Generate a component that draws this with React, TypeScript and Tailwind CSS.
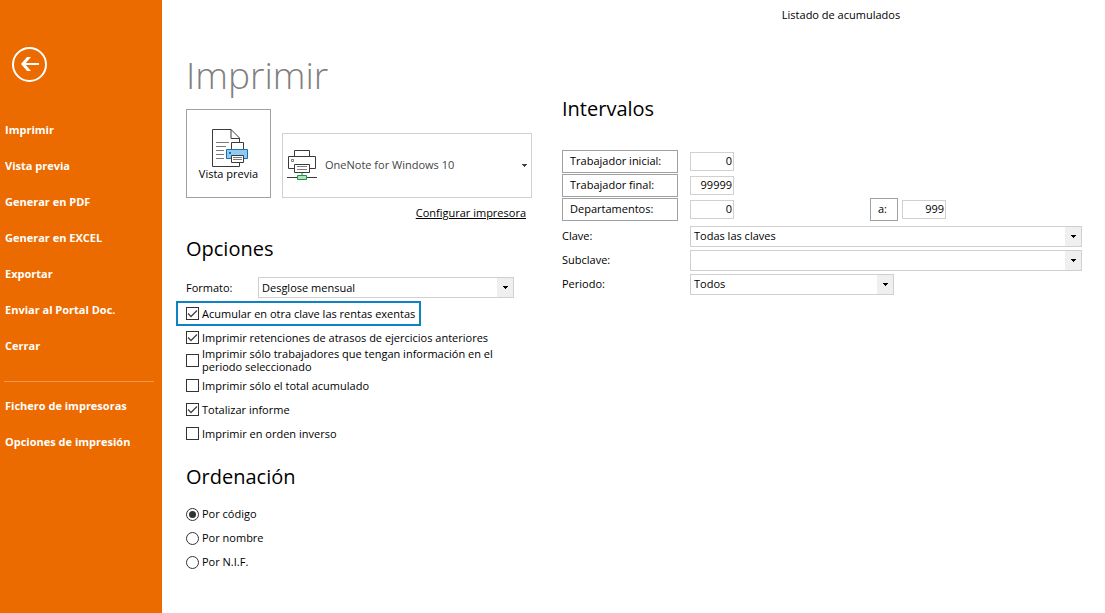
import type { ReactNode } from "react";

const mainLinks = [
  "Imprimir",
  "Vista previa",
  "Generar en PDF",
  "Generar en EXCEL",
  "Exportar",
  "Enviar al Portal Doc.",
  "Cerrar",
];

const extraLinks = ["Fichero de impresoras", "Opciones de impresión"];

function NavLink({ label }: { label: string }) {
  return (
    <a href="#" className="flex h-9 items-center px-[5px] hover:bg-[#d45f00]">
      {label}
    </a>
  );
}

function Sidebar() {
  return (
    <nav className="w-[162px] shrink-0 bg-[#eb6b00] pt-[47px] font-bold text-white">
      <button type="button" aria-label="Volver" className="ml-3 block">
        <svg width="35" height="35" viewBox="0 0 35 35" fill="none" stroke="white">
          <circle cx="17.5" cy="17.5" r="16.5" strokeWidth="2" />
          <path d="M10 17H27" strokeWidth="2" />
          <path d="M9 17L15 10H19L13 17L19 24H15Z" fill="white" stroke="none" />
        </svg>
      </button>
      <div className="mt-[30px]">
        {mainLinks.map((label) => (
          <NavLink key={label} label={label} />
        ))}
      </div>
      <hr className="mt-[17px] mr-2 mb-[6px] ml-1 border-[#f39850]" />
      {extraLinks.map((label) => (
        <NavLink key={label} label={label} />
      ))}
    </nav>
  );
}

function PreviewIcon() {
  return (
    <svg width="37" height="39" viewBox="0 0 37 39" fill="none" className="ml-1 shrink-0">
      <path d="M0.5 0.5H19L27.5 9V37.5H0.5Z" fill="white" stroke="#3b3b3b" />
      <path d="M19 0.5V9.5H27.5" stroke="#3b3b3b" />
      <path d="M4 13.5H17M4 17.5H14M4 21.5H12M4 25.5H12M4 29.5H12" stroke="#7a7a7a" />
      <path d="M19.5 20.5V13.5H31.5V20.5Z" fill="white" stroke="#3b3b3b" />
      <path d="M14.5 20.5H35.5V29.5H14.5Z" fill="#8fcaf0" stroke="#1a6fb5" />
      <path d="M17 23H19V25H17Z" fill="#1a6fb5" />
      <path d="M19.5 26.5H31.5V33.5H19.5Z" fill="white" stroke="#3b3b3b" />
      <path d="M21 28.5H30M21 30.5H30" stroke="#7a7a7a" />
    </svg>
  );
}

function PrinterIcon() {
  return (
    <svg width="31" height="31" viewBox="0 0 31 31" fill="none">
      <path d="M7.5 7V0.5H22.5V7" stroke="#3b3b3b" />
      <path d="M7 18.5H1.5V6.5H28.5V18.5H23" stroke="#3b3b3b" />
      <path d="M4.5 9.5H6.5V11.5H4.5Z" stroke="#7a7a7a" />
      <path d="M7.5 14.5H22.5V22.5H7.5Z" stroke="#3b3b3b" />
      <path d="M10 16.5H20M10 19.5H20" stroke="#7a7a7a" />
      <path d="M15 23V26" stroke="#b0b0b0" strokeWidth="2" />
      <path d="M0 27.5H30" stroke="#3b3b3b" />
      <path d="M10.5 25.5H19.5V29.5H10.5Z" fill="#b5dfbf" stroke="#0f9a48" />
    </svg>
  );
}

function Caret() {
  return (
    <svg width="5" height="3" viewBox="0 0 5 3" fill="currentColor">
      <path d="M0 0H5V1H4V2H3V3H2V2H1V1H0Z" />
    </svg>
  );
}

function Select({ id, value, className }: { id: string; value: string; className: string }) {
  return (
    <div className={`relative h-[21px] border border-[#d0d0d0] ${className}`}>
      <select id={id} className="block h-full w-full appearance-none bg-white pt-px pr-5 pl-[3px] outline-none">
        <option>{value}</option>
      </select>
      <span className="pointer-events-none absolute inset-y-0 right-0 flex w-4 items-center justify-center bg-[#efefef]">
        <Caret />
      </span>
    </div>
  );
}

type CheckProps = { checked?: boolean; className?: string; children: ReactNode };

function Check({ checked = false, className = "", children }: CheckProps) {
  return (
    <label className={`flex min-h-6 items-center gap-[3px] leading-[13px] ${className}`}>
      <span className="relative size-[13px] shrink-0">
        <input
          type="checkbox"
          defaultChecked={checked}
          className="peer block size-[13px] appearance-none border border-[#333333] bg-white"
        />
        <svg
          viewBox="0 0 13 13"
          className="pointer-events-none absolute inset-0 hidden size-[13px] peer-checked:block"
          fill="none"
          stroke="#444444"
        >
          <path d="M2 6.5L5 9.5L11 3.5" strokeWidth="1.3" />
        </svg>
      </span>
      <span>{children}</span>
    </label>
  );
}

function Radio({ checked = false, label }: { checked?: boolean; label: string }) {
  return (
    <label className="flex h-6 items-center gap-[3px]">
      <input
        type="radio"
        name="orden"
        defaultChecked={checked}
        className="size-[13px] appearance-none rounded-full border border-[#333333] bg-white bg-clip-content p-[2px] checked:bg-[#333333]"
      />
      {label}
    </label>
  );
}

function NumberBox({ label, value }: { label: string; value: string }) {
  return (
    <input
      aria-label={label}
      defaultValue={value}
      className="h-[19px] w-11 border border-[#d0d0d0] pr-px pb-[2px] text-right outline-none"
    />
  );
}

function RangeButton({ children, className }: { children: ReactNode; className: string }) {
  return (
    <button type="button" className={`h-[23px] border border-[#a0a0a0] px-[7px] pt-px text-left ${className}`}>
      {children}
    </button>
  );
}

function PrintOptions() {
  return (
    <section className="w-[346px] shrink-0">
      <h1 className="h-[55px] text-[37px] leading-[42px] font-light text-[#808080]">Imprimir</h1>
      <div className="flex items-end justify-between">
        <button
          type="button"
          className="flex h-[89px] w-[85px] flex-col items-center justify-center border border-[#a0a0a0] leading-[11px]"
        >
          <PreviewIcon />
          Vista previa
        </button>
        <div className="relative h-[65px] w-[250px] border border-[#d0d0d0] text-[#444444]">
          <select aria-label="Impresora" className="h-full w-full appearance-none bg-white pl-[42px] outline-none">
            <option>OneNote for Windows 10</option>
          </select>
          <span className="pointer-events-none absolute inset-y-0 left-1 flex items-center">
            <PrinterIcon />
          </span>
          <span className="pointer-events-none absolute inset-y-0 right-1 flex items-center">
            <Caret />
          </span>
        </div>
      </div>
      <div className="mt-[5px] pr-[6px] text-right leading-5">
        <a href="#" className="underline">
          Configurar impresora
        </a>
      </div>

      <h2 className="mt-[11px] text-xl leading-[30px]">Opciones</h2>
      <div className="mt-[13px] flex items-center">
        <label htmlFor="formato" className="w-[72px] pt-px">
          Formato:
        </label>
        <Select id="formato" value="Desglose mensual" className="w-64" />
      </div>
      <div className="mt-[3px] -mb-px -ml-[10px] flex h-[25px] w-[245px] items-center border-2 border-[#0d82c4] pl-2">
        <Check checked>Acumular en otra clave las rentas exentas</Check>
      </div>
      <Check checked>Imprimir retenciones de atrasos de ejercicios anteriores</Check>
      <Check className="-mt-[2px]">Imprimir sólo trabajadores que tengan información en el periodo seleccionado</Check>
      <Check>Imprimir sólo el total acumulado</Check>
      <Check checked>Totalizar informe</Check>
      <Check>Imprimir en orden inverso</Check>

      <h2 className="mt-[17px] text-xl leading-[30px]">Ordenación</h2>
      <div className="mt-[10px]">
        <Radio checked label="Por código" />
        <Radio label="Por nombre" />
        <Radio label="Por N.I.F." />
      </div>
    </section>
  );
}

function Intervals() {
  return (
    <section className="min-w-0 flex-1 pt-10">
      <h2 className="text-xl leading-[30px]">Intervalos</h2>
      <div className="mt-[25px]">
        <div className="flex h-6 items-center gap-3">
          <RangeButton className="w-[116px]">Trabajador inicial:</RangeButton>
          <NumberBox label="Trabajador inicial" value="0" />
        </div>
        <div className="flex h-6 items-center gap-3">
          <RangeButton className="w-[116px]">Trabajador final:</RangeButton>
          <NumberBox label="Trabajador final" value="99999" />
        </div>
        <div className="flex h-6 items-center gap-3">
          <RangeButton className="w-[116px]">Departamentos:</RangeButton>
          <NumberBox label="Departamento inicial" value="0" />
          <div className="ml-[124px] flex items-center gap-1">
            <RangeButton className="w-7">a:</RangeButton>
            <NumberBox label="Departamento final" value="999" />
          </div>
        </div>
      </div>
      <div className="mt-[3px]">
        <div className="flex h-6 items-center">
          <label htmlFor="clave" className="w-32 shrink-0 pt-px">
            Clave:
          </label>
          <Select id="clave" value="Todas las claves" className="flex-1" />
        </div>
        <div className="flex h-6 items-center">
          <label htmlFor="subclave" className="w-32 shrink-0 pt-px">
            Subclave:
          </label>
          <Select id="subclave" value="" className="flex-1" />
        </div>
        <div className="flex h-6 items-center">
          <label htmlFor="periodo" className="w-32 shrink-0 pt-px">
            Periodo:
          </label>
          <Select id="periodo" value="Todos" className="w-[204px]" />
        </div>
      </div>
    </section>
  );
}

export default function App() {
  return (
    <div className="flex min-h-screen bg-white font-['Open_Sans','Noto_Sans',sans-serif] text-[11px] text-black">
      <Sidebar />
      <main className="min-w-0 flex-1 pr-[23px] pl-6">
        <header className="h-[54px] pt-[5px] pl-[414px] text-center leading-5">Listado de acumulados</header>
        <div className="flex gap-[30px]">
          <PrintOptions />
          <Intervals />
        </div>
      </main>
    </div>
  );
}
